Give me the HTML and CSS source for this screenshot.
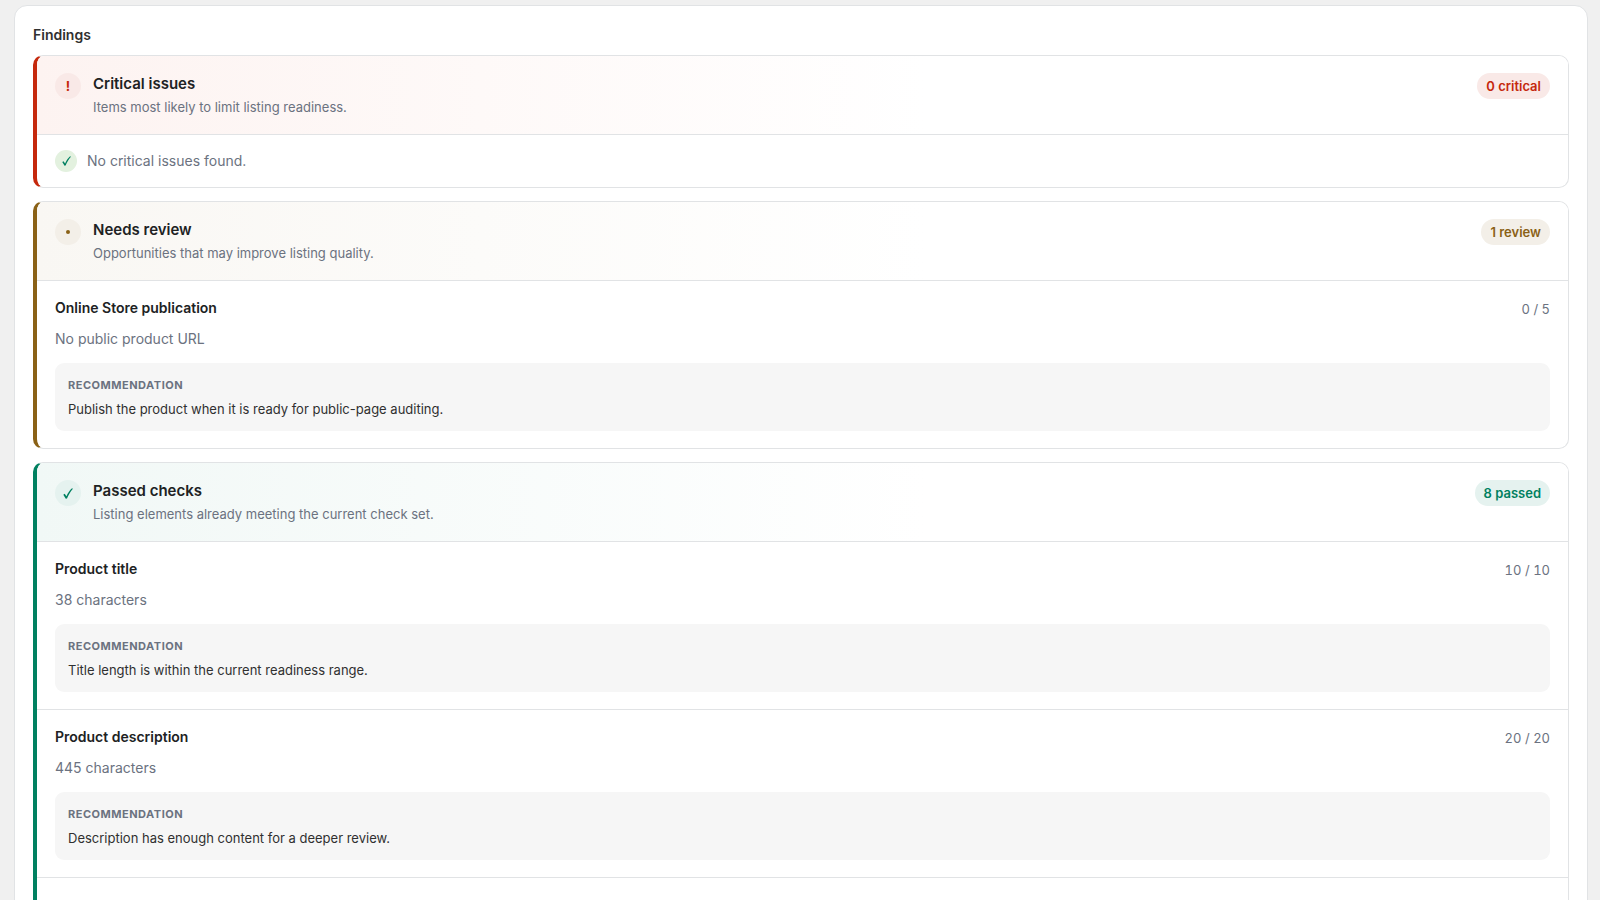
FILE: index.html
```html
<!DOCTYPE html>
<html lang="en">
<head>
    <meta charset="UTF-8">
    <meta name="viewport" content="width=device-width, initial-scale=1.0">
    <title>Findings</title>
    <link rel="stylesheet" href="styles.css">
</head>
<body>
    <main class="panel">
        <h2 class="panel-title">Findings</h2>

        <div class="groups">
            <section class="group group-critical">
                <header class="group-header">
                    <span class="group-icon">!</span>
                    <div class="group-heading">
                        <h3>Critical issues</h3>
                        <p>Items most likely to limit listing readiness.</p>
                    </div>
                    <span class="badge">0 critical</span>
                </header>
                <div class="empty">
                    <span class="empty-icon">
                        <svg width="9" height="10" viewBox="0 0 10 11"><path d="M.3 6.7 1.7 5.7 3.4 8.3C5 4.7 6.8 2.1 9 .2L9.9.7C7.4 3.6 5.4 7 4 10.6L2.8 10.7Z" /></svg>
                    </span>
                    <p>No critical issues found.</p>
                </div>
            </section>

            <section class="group group-review">
                <header class="group-header">
                    <span class="group-icon"><span class="dot"></span></span>
                    <div class="group-heading">
                        <h3>Needs review</h3>
                        <p>Opportunities that may improve listing quality.</p>
                    </div>
                    <span class="badge">1 review</span>
                </header>
                <article class="item">
                    <div class="item-top">
                        <h4>Online Store publication</h4>
                        <span class="score">0 / 5</span>
                    </div>
                    <p class="item-detail">No public product URL</p>
                    <div class="recommendation">
                        <strong>Recommendation</strong>
                        <p>Publish the product when it is ready for public-page auditing.</p>
                    </div>
                </article>
            </section>

            <section class="group group-passed">
                <header class="group-header">
                    <span class="group-icon">
                        <svg width="10" height="11" viewBox="0 0 10 11"><path d="M.3 6.7 1.7 5.7 3.4 8.3C5 4.7 6.8 2.1 9 .2L9.9.7C7.4 3.6 5.4 7 4 10.6L2.8 10.7Z" /></svg>
                    </span>
                    <div class="group-heading">
                        <h3>Passed checks</h3>
                        <p>Listing elements already meeting the current check set.</p>
                    </div>
                    <span class="badge">8 passed</span>
                </header>
                <article class="item">
                    <div class="item-top">
                        <h4>Product title</h4>
                        <span class="score">10 / 10</span>
                    </div>
                    <p class="item-detail">38 characters</p>
                    <div class="recommendation">
                        <strong>Recommendation</strong>
                        <p>Title length is within the current readiness range.</p>
                    </div>
                </article>
                <article class="item">
                    <div class="item-top">
                        <h4>Product description</h4>
                        <span class="score">20 / 20</span>
                    </div>
                    <p class="item-detail">445 characters</p>
                    <div class="recommendation">
                        <strong>Recommendation</strong>
                        <p>Description has enough content for a deeper review.</p>
                    </div>
                </article>
                <article class="item"></article>
            </section>
        </div>
    </main>
</body>
</html>
```
FILE: styles.css
```css
* { box-sizing: border-box; }
html { height: 100%; }
body { height: 100%; margin: 0; padding: 5px 12px 0 14px; overflow: hidden; background: #f0f0f0; color: #202223; font-family: Inter, "Liberation Sans", sans-serif; font-size: 14px; line-height: 20px; }
h2, h3, h4, p { margin: 0; }

.panel { background: #fff; border: 1px solid #e1e3e5; border-radius: 13px; padding: 18px; }
.panel-title { font-size: 14px; line-height: 22px; font-weight: 600; color: #303030; margin-bottom: 9px; }
.groups { display: flex; flex-direction: column; gap: 13px; }

.group { border: 1px solid #e1e3e5; border-left: 4px solid; border-radius: 10px; overflow: hidden; }
.group-critical { border-left-color: #c5280c; }
.group-review { border-left-color: #8a6116; }
.group-passed { border-left-color: #008060; }

.group-header { display: flex; align-items: flex-start; gap: 12px; padding: 17px 18px; border-bottom: 1px solid #e1e3e5; }
.group-critical .group-header { background: linear-gradient(90deg, #fdf3f1, #fff 58%); }
.group-review .group-header { background: linear-gradient(90deg, #f9f7f3, #fff 58%); }
.group-passed .group-header { background: linear-gradient(90deg, #f1f8f6, #fff 58%); }

.group-icon { display: flex; align-items: center; justify-content: center; width: 26px; height: 26px; border-radius: 50%; font-size: 13px; font-weight: 700; }
.group-heading { flex: 1; }
.group-heading h3 { font-size: 15px; line-height: 22px; font-weight: 600; }
.group-heading p { margin-top: 2px; font-size: 13px; line-height: 20px; color: #6b7280; }
.badge { padding: 3px 9px; border-radius: 13px; font-size: 13px; line-height: 20px; font-weight: 600; }

.group-critical .group-icon, .group-critical .badge { background: #f9e9e7; color: #c5280c; }
.group-review .group-icon, .group-review .badge { background: #f3efe8; color: #8a6116; }
.group-passed .group-icon, .group-passed .badge { background: #e5f2ef; color: #008060; }

.dot { width: 4px; height: 4px; border-radius: 50%; background: currentColor; }
svg path { fill: #008060; }

.empty { display: flex; align-items: center; gap: 10px; padding: 15px 18px; color: #6b7280; }
.empty-icon { display: flex; align-items: center; justify-content: center; width: 22px; height: 22px; border-radius: 50%; background: #e3f1df; }

.item { padding: 16px 18px 17px; }
.item + .item { border-top: 1px solid #e1e3e5; }
.item-top { display: flex; justify-content: space-between; align-items: flex-end; gap: 12px; }
.item-top h4 { font-size: 14px; line-height: 22px; font-weight: 600; }
.score { font-size: 13px; font-variant-numeric: tabular-nums; color: #6b7280; }
.item-detail { margin: 10px 0 14px; color: #6b7280; }
.recommendation { padding: 12px 13px; border-radius: 9px; background: #f6f6f6; }
.recommendation strong { display: block; font-size: 11px; line-height: 20px; font-weight: 700; letter-spacing: 0.5px; text-transform: uppercase; color: #6b7280; }
.recommendation p { margin-top: 4px; font-size: 13px; line-height: 20px; color: #303030; }
```
